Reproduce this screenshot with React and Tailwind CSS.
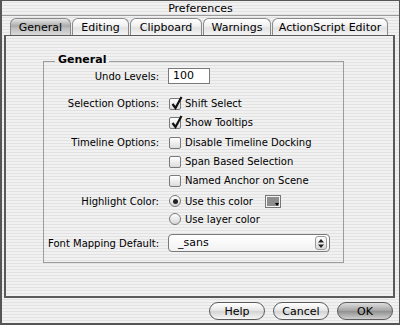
import React from "react";

const STRIPES =
  "bg-[repeating-linear-gradient(180deg,#f1f1f1_0px,#f1f1f1_2px,#e2e2e2_2px,#e2e2e2_3px)] bg-fixed";

const Tab = ({ label, active, width }) => (
  <div
    className={`${width} h-[17px] flex items-center justify-center rounded-t-[6px] border border-b-0 border-[#8a8a8a] text-[11px] leading-none ${
      active
        ? "bg-[linear-gradient(180deg,#e8e8e8,#a9a9a9_45%,#bdbdbd_55%,#dadada)]"
        : "bg-[linear-gradient(180deg,#ffffff,#f0f0f0_45%,#e2e2e2_55%,#f4f4f4)]"
    }`}
  >
    {label}
  </div>
);

const Checkbox = ({ checked, label }) => (
  <div className="flex items-center h-[19px]">
    <div className="relative w-[12px] h-[12px] rounded-[2px] border border-[#7a7a7a] bg-[linear-gradient(180deg,#ffffff,#dcdcdc)]">
      {checked && (
        <svg
          className="absolute left-[1px] top-[-3px]"
          width="12"
          height="14"
          viewBox="0 0 12 14"
        >
          <path
            d="M1.5 8 L4.5 12 L10.5 1"
            fill="none"
            stroke="#111"
            strokeWidth="2.2"
          />
        </svg>
      )}
    </div>
    <span className="ml-[4px]">{label}</span>
  </div>
);

const Radio = ({ checked, label, children }) => (
  <div className="flex items-center h-[18px]">
    <div className="w-[12px] h-[12px] rounded-full border border-[#7a7a7a] bg-[linear-gradient(180deg,#ffffff,#d6d6d6)] flex items-center justify-center">
      {checked && <div className="w-[5px] h-[5px] rounded-full bg-[#222]" />}
    </div>
    <span className="ml-[4px]">{label}</span>
    {children}
  </div>
);

const Label = ({ children }) => (
  <div className="w-[115px] text-right shrink-0">{children}</div>
);

const Button = ({ label, def }) => (
  <div
    className={`w-[56px] h-[18px] flex items-center justify-center rounded-full border border-[#5a5a5a] text-[11px] leading-none ${
      def
        ? "bg-[linear-gradient(180deg,#dedede,#a2a2a2_50%,#8e8e8e_50%,#cfcfcf)]"
        : "bg-[linear-gradient(180deg,#ffffff,#e4e4e4_50%,#d2d2d2_50%,#f6f6f6)]"
    }`}
  >
    {label}
  </div>
);

export default function App() {
  return (
    <div
      className={`w-[400px] h-[325px] flex flex-col border-l-2 border-r border-b-2 border-t border-[#555] text-black font-['DejaVu_Sans',sans-serif] text-[10px] ${STRIPES}`}
    >
      {/* title bar */}
      <div className="h-[15px] shrink-0 flex items-center justify-center border-b border-[#9a9a9a] text-[11px] leading-none">
        Preferences
      </div>

      {/* tabs */}
      <div className="flex pl-[8px] pt-[2px] gap-[1px] shrink-0">
        <Tab label="General" active width="w-[61px]" />
        <Tab label="Editing" width="w-[57px]" />
        <Tab label="Clipboard" width="w-[72px]" />
        <Tab label="Warnings" width="w-[68px]" />
        <Tab label="ActionScript Editor" width="w-[116px]" />
      </div>

      {/* pane */}
      <div className="ml-[2px] mr-[4px] h-[263px] shrink-0 border-2 border-t border-[#5a5a5a] border-b-[2px] pt-[25px] pl-[37px]">
        <div className="w-[301px] h-[202px] border border-[#9c9c9c]">
          <div className={`-mt-[8px] ml-[11px] w-fit px-[3px] font-bold text-[11px] leading-[12px] ${STRIPES}`}>
            General
          </div>

          <div className="flex items-center mt-[2px] h-[16px]">
            <Label>Undo Levels:</Label>
            <div className="ml-[9px] w-[42px] h-[16px] border border-[#7a7a7a] bg-white flex items-center pl-[4px] text-[11px]">
              100
            </div>
          </div>

          <div className="flex mt-[10px]">
            <Label>
              <div className="h-[19px] flex items-center justify-end">Selection Options:</div>
            </Label>
            <div className="ml-[10px]">
              <Checkbox checked label="Shift Select" />
              <Checkbox checked label="Show Tooltips" />
            </div>
          </div>

          <div className="flex mt-[1px]">
            <Label>
              <div className="h-[19px] flex items-center justify-end">Timeline Options:</div>
            </Label>
            <div className="ml-[10px]">
              <Checkbox label="Disable Timeline Docking" />
              <Checkbox label="Span Based Selection" />
              <Checkbox label="Named Anchor on Scene" />
            </div>
          </div>

          <div className="flex mt-[2px]">
            <Label>
              <div className="h-[18px] flex items-center justify-end">Highlight Color:</div>
            </Label>
            <div className="ml-[10px]">
              <Radio checked label="Use this color">
                <div className="relative ml-[12px] w-[16px] h-[13px] border border-[#777] bg-[#8e8e8e] shadow-[inset_0_0_0_1px_#f4f4f4]">
                  <div className="absolute right-[1px] bottom-[1px] w-0 h-0 border-l-[2px] border-r-[2px] border-t-[3px] border-l-transparent border-r-transparent border-t-black" />
                </div>
              </Radio>
              <Radio label="Use layer color" />
            </div>
          </div>

          <div className="flex items-center mt-[6px]">
            <Label>Font Mapping Default:</Label>
            <div className="ml-[9px] w-[162px] h-[18px] rounded-[4px] border border-[#7a7a7a] bg-[linear-gradient(180deg,#ffffff,#f2f2f2)] flex items-center">
              <span className="pl-[9px] flex-1 text-[11px]">_sans</span>
              <div className="w-[12px] h-[14px] mr-[2px] rounded-[3px] border border-[#9a9a9a] bg-[linear-gradient(180deg,#ffffff,#d8d8d8)] flex items-center justify-center">
                <svg width="6" height="9" viewBox="0 0 6 9">
                  <path d="M3 0 L6 3.5 L0 3.5 Z M0 5.5 L6 5.5 L3 9 Z" fill="#222" />
                </svg>
              </div>
            </div>
          </div>
        </div>
      </div>

      {/* buttons */}
      <div className="flex justify-end gap-[8px] pr-[6px] pt-[4px]">
        <Button label="Help" />
        <Button label="Cancel" />
        <Button label="OK" def />
      </div>
    </div>
  );
}
